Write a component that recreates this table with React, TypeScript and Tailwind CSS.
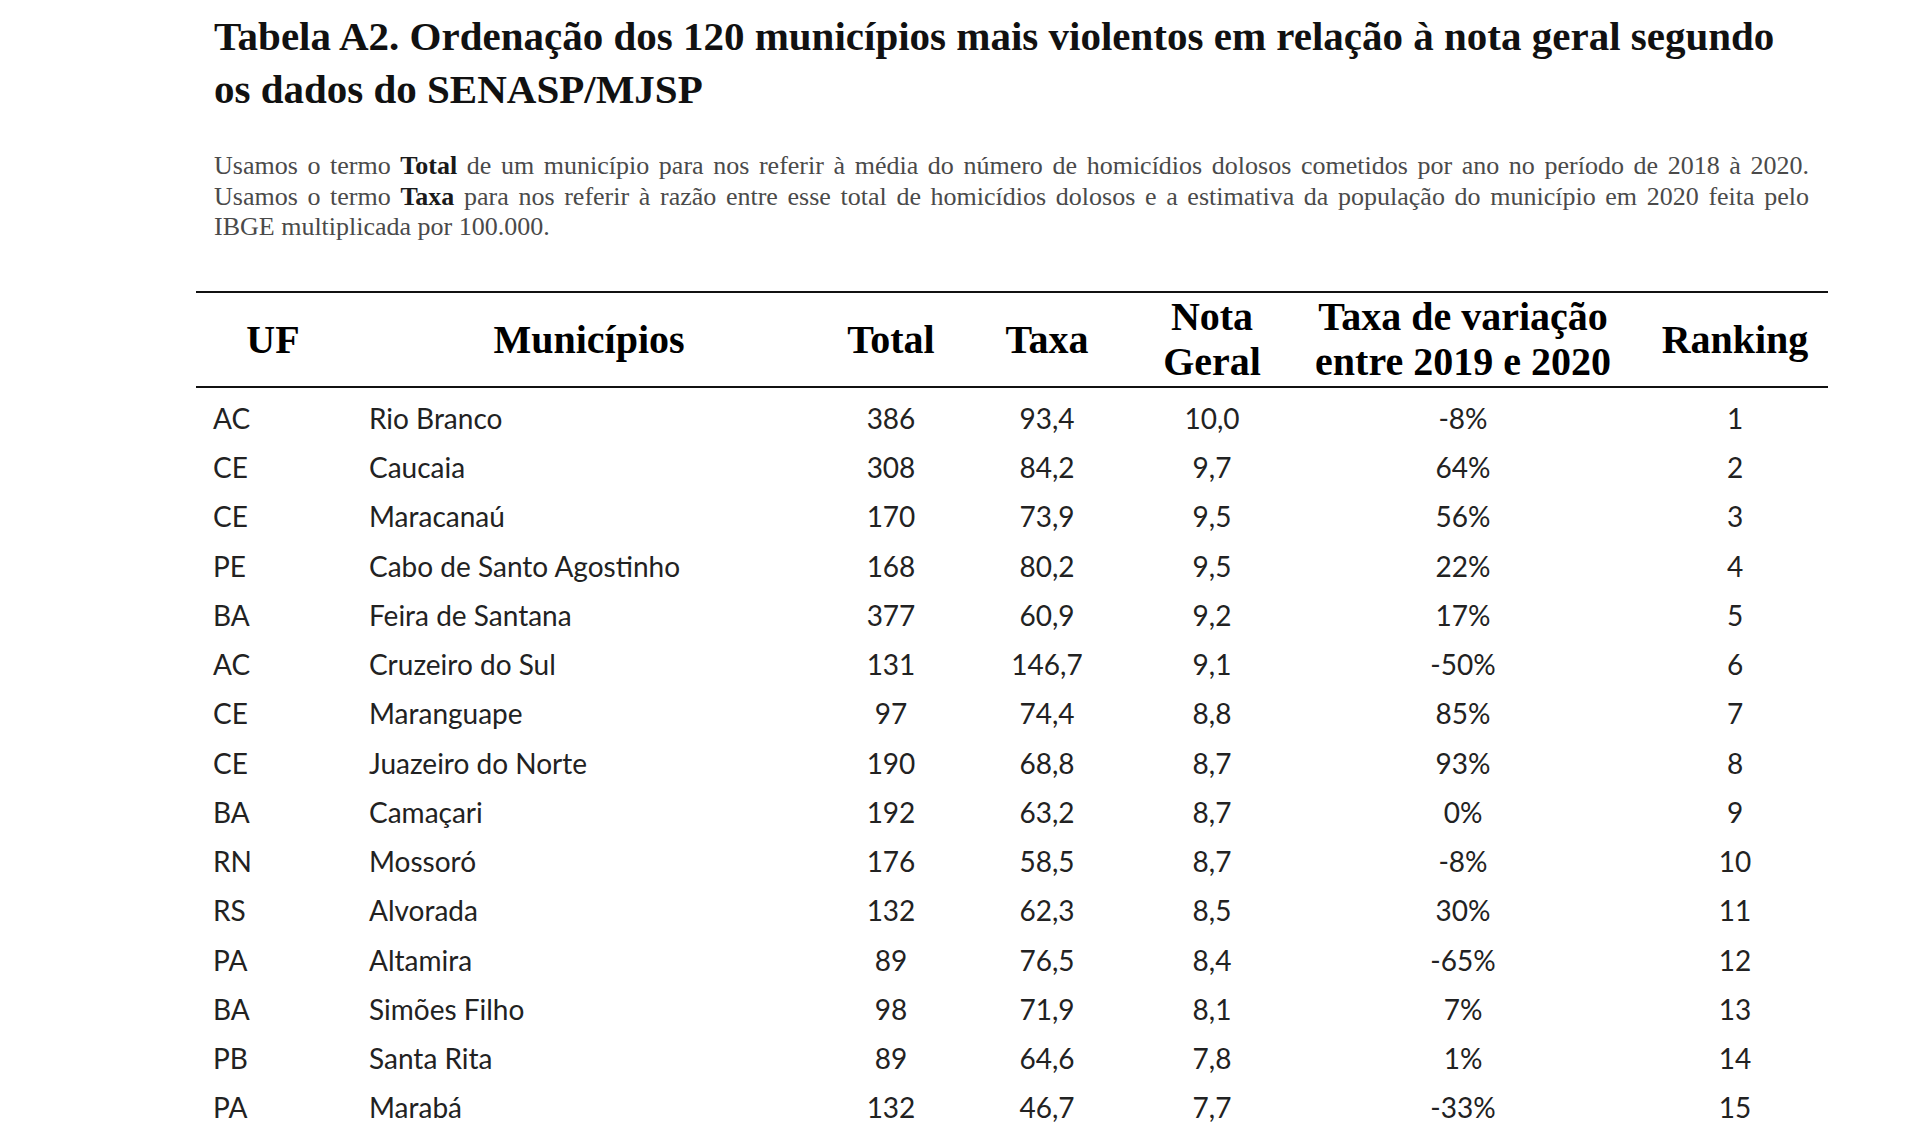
const rows = [
  ["AC", "Rio Branco", "386", "93,4", "10,0", "-8%", "1"],
  ["CE", "Caucaia", "308", "84,2", "9,7", "64%", "2"],
  ["CE", "Maracanaú", "170", "73,9", "9,5", "56%", "3"],
  ["PE", "Cabo de Santo Agostinho", "168", "80,2", "9,5", "22%", "4"],
  ["BA", "Feira de Santana", "377", "60,9", "9,2", "17%", "5"],
  ["AC", "Cruzeiro do Sul", "131", "146,7", "9,1", "-50%", "6"],
  ["CE", "Maranguape", "97", "74,4", "8,8", "85%", "7"],
  ["CE", "Juazeiro do Norte", "190", "68,8", "8,7", "93%", "8"],
  ["BA", "Camaçari", "192", "63,2", "8,7", "0%", "9"],
  ["RN", "Mossoró", "176", "58,5", "8,7", "-8%", "10"],
  ["RS", "Alvorada", "132", "62,3", "8,5", "30%", "11"],
  ["PA", "Altamira", "89", "76,5", "8,4", "-65%", "12"],
  ["BA", "Simões Filho", "98", "71,9", "8,1", "7%", "13"],
  ["PB", "Santa Rita", "89", "64,6", "7,8", "1%", "14"],
  ["PA", "Marabá", "132", "46,7", "7,7", "-33%", "15"],
]

// column widths, measured from the reference
const cols = "grid grid-cols-[154px_478px_126px_186px_144px_358px_186px]"

export default function App() {
  return (
    <div className="min-h-screen w-full overflow-hidden bg-white">
      <div className="pl-[214px] pt-[10px]">
        <h1 className="font-['Liberation_Serif',serif] text-[41px] font-bold leading-[53px] text-[#111]">
          Tabela A2. Ordenação dos 120 municípios mais violentos em relação à nota geral segundo
          <br />
          os dados do SENASP/MJSP
        </h1>

        <div className="mt-[35px] w-[1595px] font-['Liberation_Serif',serif] text-[26px] leading-[30.6px] text-[#4a4a4a]">
          <div className="text-justify [text-align-last:justify]">
            Usamos o termo <b className="text-[#1a1a1a]">Total</b> de um município para nos referir à média do número de
            homicídios dolosos cometidos por ano no período de 2018 à 2020.
          </div>
          <div className="text-justify [text-align-last:justify]">
            Usamos o termo <b className="text-[#1a1a1a]">Taxa</b> para nos referir à razão entre esse total de homicídios
            dolosos e a estimativa da população do município em 2020 feita pelo
          </div>
          <div>IBGE multiplicada por 100.000.</div>
        </div>
      </div>

      <div className="ml-[196px] mt-[48px] w-[1632px]">
        <div
          className={`${cols} h-[97px] items-center border-y-2 border-[#111] text-center font-['Liberation_Serif',serif] text-[40px] font-bold leading-[45px] text-black`}
        >
          <div>UF</div>
          <div>Municípios</div>
          <div>Total</div>
          <div>Taxa</div>
          <div>
            Nota
            <br />
            Geral
          </div>
          <div>
            Taxa de variação
            <br />
            entre 2019 e 2020
          </div>
          <div>Ranking</div>
        </div>

        <div className="pt-[6px] font-['Lato',sans-serif] text-[28px] text-[#222]">
          {rows.map((r, i) => (
            <div key={i} className={`${cols} h-[49.25px] items-center leading-[49.25px]`}>
              <div className="pl-[17px]">{r[0]}</div>
              <div className="pl-[19px]">{r[1]}</div>
              <div className="text-center">{r[2]}</div>
              <div className="text-center">{r[3]}</div>
              <div className="text-center">{r[4]}</div>
              <div className="text-center">{r[5]}</div>
              <div className="text-center">{r[6]}</div>
            </div>
          ))}
        </div>
      </div>
    </div>
  )
}
